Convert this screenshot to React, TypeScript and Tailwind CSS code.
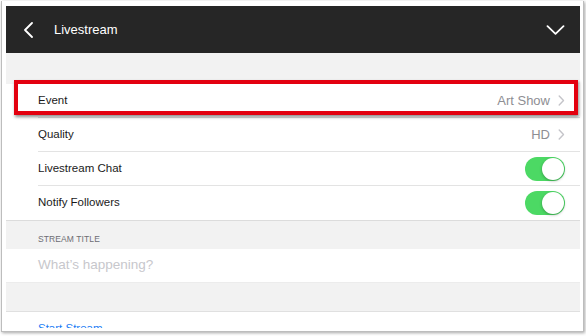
import React from "react";

function RowChevron() {
  return (
    <svg width="7" height="11" viewBox="0 0 7 11" className="ml-[8px]">
      <path d="M1.2 1l4.3 4.5L1.2 10" fill="none" stroke="#c4c4c9" strokeWidth="1.4" strokeLinecap="round" strokeLinejoin="round" />
    </svg>
  );
}

function Toggle() {
  return (
    <div className="relative w-[40px] h-[24px] rounded-full bg-[#4cd964]">
      <div className="absolute right-[1px] top-[1px] w-[22px] h-[22px] rounded-full bg-white shadow-[0_1px_3px_rgba(0,0,0,0.3)]" />
    </div>
  );
}

function Row({ label, children, border = true }: { label: string; children?: React.ReactNode; border?: boolean }) {
  return (
    <div className="pl-[32px] bg-white">
      <div className={`flex items-center justify-between h-[34px] pr-[15px] ${border ? "border-b border-[#e3e3e3]" : ""}`}>
        <span className="text-[11.5px] text-[#1a1a1a]">{label}</span>
        <div className="flex items-center">{children}</div>
      </div>
    </div>
  );
}

export default function App() {
  return (
    <div className="relative w-[586px] h-[336px] bg-white overflow-hidden pt-[1px] pl-[1px]" style={{ fontFamily: '"Liberation Sans", Arial, sans-serif' }}>
      <div className="w-[583px] h-[331px] bg-white border-l border-r border-b border-[#bdbdbd] shadow-[1px_1px_3px_rgba(0,0,0,0.35)] pl-[4px] pt-[5px]">
        <div className="w-[574px] h-[322px] overflow-hidden bg-white">
          <div className="h-[47px] bg-[#262626] flex items-center">
            <svg width="11" height="16" viewBox="0 0 11 16" className="ml-[17px]">
              <path d="M9 1L2 8l7 7" fill="none" stroke="#ffffff" strokeWidth="1.8" strokeLinecap="round" strokeLinejoin="round" />
            </svg>
            <span className="ml-[20px] text-[13px] text-white">Livestream</span>
            <div className="flex-1" />
            <svg width="19" height="10" viewBox="0 0 19 10" className="mr-[15px]">
              <path d="M1.5 1.2l8 7.6 8-7.6" fill="none" stroke="#ffffff" strokeWidth="1.8" strokeLinecap="round" strokeLinejoin="round" />
            </svg>
          </div>
          <div className="h-[31px] bg-[#f2f2f2]" />
          <Row label="Event">
            <span className="text-[13px] text-[#8e8e93]">Art Show</span>
            <RowChevron />
          </Row>
          <Row label="Quality">
            <span className="text-[13px] text-[#8e8e93]">HD</span>
            <RowChevron />
          </Row>
          <Row label="Livestream Chat">
            <Toggle />
          </Row>
          <Row label="Notify Followers" border={false}>
            <Toggle />
          </Row>
          <div className="h-[29px] bg-[#f2f2f2] border-t border-[#dcdcdc] flex items-center pl-[32px] pt-[9px]">
            <span className="text-[8.5px] text-[#6d6d72] tracking-[0.1px]">STREAM TITLE</span>
          </div>
          <div className="h-[34px] bg-white flex items-center pl-[32px] border-b border-[#ececec]">
            <span className="text-[13.5px] text-[#c7c7cc]">What’s happening?</span>
          </div>
          <div className="h-[29px] bg-[#f2f2f2] border-b border-[#e0e0e0]" />
          <div className="h-[34px] bg-white flex items-center pl-[32px]">
            <span className="text-[11.5px] text-[#1a7cf5]">Start Stream</span>
          </div>
        </div>
      </div>
      <div className="absolute left-[14px] top-[80px] w-[564px] h-[35px] border-[4px] border-[#e3000f] shadow-[1px_2px_3px_rgba(0,0,0,0.45)]" />
    </div>
  );
}
